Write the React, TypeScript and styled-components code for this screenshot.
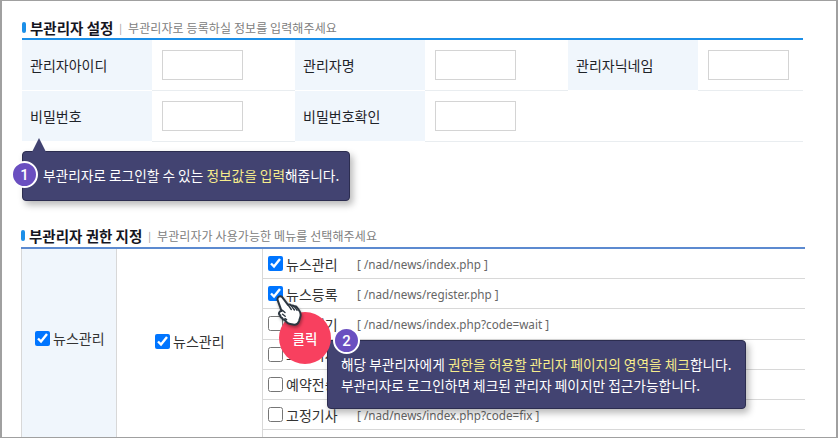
import React from 'react'
import styled, { createGlobalStyle } from 'styled-components'

const GlobalStyle = createGlobalStyle`
    html, body {
        margin: 0;
        padding: 0;
        background: #fff;
    }
    body {
        font-family: "Noto Sans CJK KR", "Noto Sans", sans-serif;
        overflow: hidden;
    }
`

const menuRows = [
    { name: '뉴스관리', path: '[ /nad/news/index.php ]', checked: true },
    { name: '뉴스등록', path: '[ /nad/news/register.php ]', checked: true },
    { name: '뉴스대기', path: '[ /nad/news/index.php?code=wait ]', checked: false },
    { name: '보류기사', path: '[ /nad/news/index.php?code=hold ]', checked: false },
    { name: '예약전송', path: '[ /nad/news/index.php?code=res ]', checked: false },
    { name: '고정기사', path: '[ /nad/news/index.php?code=fix ]', checked: false },
    { name: '', path: '', checked: false },
]

const HandCursor = () => (
    <HandSvg width="26" height="32" viewBox="0 0 26 32">
        <path
            d="M2 2.500C3 .8 5 .8 6.200 2.200L12 9.800c1.300-.4 2.500-.1 3.300.8 1.100-.4 2.200-.1 3 .8 1-.2 1.900.1 2.600 1l2.300 3.100c1.400 2 1.800 4.300 1.100 6.500l-1.200 3.800c-.9 2.600-3.400 4.200-6 3.800l-2.900-.5c-1.400-.2-2.700-.9-3.600-2l-2-2.300c-1.200.1-2.200-.7-2.400-1.900-1.200-.2-2-1.300-1.900-2.500-1.100-.6-1.500-1.900-1-3 .4-.9 1.300-1.400 2.300-1.300L1.900 5.800C1.300 4.700 1.400 3.500 2 2.500z"
            fill="#fff"
            stroke="#2c3640"
            strokeWidth="2"
            strokeLinejoin="round"
        />
        <path d="M12.200 10.200l3.100 4.300M15.400 10.800l3 4.200M18.500 11.600l2.600 3.700M6.400 15.200l2.600 2.400M6.600 19.300l2.600 2M9 23.600l1.600 1.100" fill="none" stroke="#2c3640" strokeWidth="1.400" strokeLinecap="round" />
    </HandSvg>
)

const App: React.FC = () => {
    return (
        <Frame>
            <GlobalStyle />
            <SectionTitle>
                <TitleMark />
                <TitleText>부관리자 설정</TitleText>
                <TitleDivider>|</TitleDivider>
                <TitleHint>부관리자로 등록하실 정보를 입력해주세요</TitleHint>
            </SectionTitle>
            <FormGrid>
                <FormLabel>관리자아이디</FormLabel>
                <FormCell><TextBox /></FormCell>
                <FormLabel>관리자명</FormLabel>
                <FormCell><TextBox /></FormCell>
                <FormLabel>관리자닉네임</FormLabel>
                <FormCell><TextBox /></FormCell>
                <FormLabel>비밀번호</FormLabel>
                <FormCell><TextBox /></FormCell>
                <FormLabel>비밀번호확인</FormLabel>
                <FormCell><TextBox /></FormCell>
                <BlankCell />
                <CalloutOne>
                    <Badge>1</Badge>
                    부관리자로 로그인할 수 있는 <Mark>정보값을 입력</Mark>해줍니다.
                </CalloutOne>
            </FormGrid>

            <SectionTitleLower>
                <TitleMark />
                <TitleText>부관리자 권한 지정</TitleText>
                <TitleDivider>|</TitleDivider>
                <TitleHint>부관리자가 사용가능한 메뉴를 선택해주세요</TitleHint>
            </SectionTitleLower>
            <MenuTable>
                <GroupCell>
                    <CheckLabel>
                        <CheckBox type="checkbox" defaultChecked />
                        뉴스관리
                    </CheckLabel>
                </GroupCell>
                <SubGroupCell>
                    <CheckLabel>
                        <CheckBox type="checkbox" defaultChecked />
                        뉴스관리
                    </CheckLabel>
                </SubGroupCell>
                <MenuList>
                    {menuRows.map((row, i) => (
                        <MenuRow key={i}>
                            {row.name && (
                                <>
                                    <RowName>
                                        <CheckBox type="checkbox" defaultChecked={row.checked} />
                                        {row.name}
                                    </RowName>
                                    <RowPath>{row.path}</RowPath>
                                </>
                            )}
                        </MenuRow>
                    ))}
                </MenuList>
                <HandCursor />
                <ClickDot>클릭</ClickDot>
                <CalloutTwo>
                    <Badge>2</Badge>
                    <CalloutLine>해당 부관리자에게 <Mark>권한을 허용할 관리자 페이지의 영역을 체크</Mark>합니다.</CalloutLine>
                    <CalloutLine>부관리자로 로그인하면 체크된 관리자 페이지만 접근가능합니다.</CalloutLine>
                </CalloutTwo>
            </MenuTable>
        </Frame>
    )
}

const Frame = styled.div`
    box-sizing: border-box;
    width: 838px;
    height: 438px;
    padding: 16px 33px 0 20px;
    border: 1px solid #a0a0a0;
    border-width: 1px 2px 1px 2px;
    overflow: hidden;
    position: relative;
    background: #fff;
`

const SectionTitle = styled.div`
    display: flex;
    align-items: center;
    height: 20px;
    color: #111;
`

const SectionTitleLower = styled(SectionTitle)`
    margin-top: 83px;
    margin-left: -1px;
`

const TitleMark = styled.span`
    width: 4px;
    height: 11px;
    margin-right: 4px;
    border-radius: 2px;
    background: #1c8fe8;
`

const TitleText = styled.strong`
    font-size: 14.500px;
    font-weight: 700;
    color: #15151f;
`

const TitleDivider = styled.span`
    margin: 0 6px;
    font-size: 10px;
    color: #999;
`

const TitleHint = styled.span`
    font-size: 12px;
    letter-spacing: 0.1px;
    color: #808080;
`

const FormGrid = styled.div`
    position: relative;
    display: grid;
    width: 781px;
    grid-template-columns: 130px 143px 130px 143px 130px 105px;
    grid-auto-rows: 51px;
    margin-top: 1px;
    border-top: 2px solid #1c8fe8;
`

const FormLabel = styled.div`
    display: flex;
    align-items: center;
    padding-left: 8px;
    background: #f0f6fc;
    border-bottom: 1px solid #fff;
    font-size: 14px;
    color: #1f2329;
`

const FormCell = styled.div`
    display: flex;
    align-items: center;
    padding: 0 0 1px 10px;
    border-bottom: 1px solid #e9edf0;
`

const BlankCell = styled.div`
    grid-column: span 2;
    border-bottom: 1px solid #e9edf0;
`

const TextBox = styled.input`
    box-sizing: border-box;
    width: 81px;
    height: 30px;
    border: 1px solid #d4d4d4;
    background: #fff;
    outline: none;
`

const Callout = styled.div`
    position: absolute;
    box-sizing: border-box;
    background: #424371;
    border: 1px solid #2c2d50;
    border-radius: 4px;
    box-shadow: 3px 4px 7px rgba(0, 0, 0, 0.28);
    font-size: 13.700px;
    color: #fff;
`

const CalloutOne = styled(Callout)`
    left: 0;
    top: 111px;
    width: 328px;
    height: 50px;
    padding: 13px 0 0 20px;
    white-space: nowrap;

    &::before {
        content: '';
        position: absolute;
        left: 9px;
        top: -14px;
        border-left: 7px solid transparent;
        border-right: 7px solid transparent;
        border-bottom: 14px solid #424371;
    }
`

const CalloutTwo = styled(Callout)`
    left: 306px;
    top: 91px;
    width: 419px;
    height: 69px;
    padding: 13px 0 0 13px;
`

const CalloutLine = styled.div`
    height: 21px;
    line-height: 21px;
    white-space: nowrap;
`

const Mark = styled.span`
    color: #f6ec8c;
`

const Badge = styled.span`
    position: absolute;
    display: flex;
    align-items: center;
    justify-content: center;
    box-sizing: border-box;
    width: 27px;
    height: 27px;
    left: -12px;
    top: 9px;
    border: 2px solid #fff;
    border-radius: 50%;
    background: #6a4fc0;
    font-family: "Roboto", sans-serif;
    font-size: 15px;
    font-weight: 500;
    color: #fff;

    ${CalloutTwo} & {
        left: 5px;
        top: -14px;
    }
`

const MenuTable = styled.div`
    position: relative;
    display: grid;
    width: 784px;
    margin-top: 2px;
    grid-template-columns: 96px 146px 542px;
    border-top: 2px solid #5c8ad0;
    margin-left: -1px;
`

const GroupCell = styled.div`
    display: flex;
    align-items: flex-start;
    padding: 79px 0 0 13px;
    background: #f0f6fc;
    border-left: 1px solid #d8d8d8;
    border-right: 1px solid #d8d8d8;
`

const SubGroupCell = styled.div`
    display: flex;
    align-items: flex-start;
    padding: 82px 0 0 38px;
    border-right: 1px solid #d8d8d8;
`

const MenuList = styled.div`
    display: flex;
    flex-direction: column;
`

const MenuRow = styled.div`
    flex: none;
    display: flex;
    align-items: center;
    box-sizing: border-box;
    height: 30.200px;
    padding-left: 5px;
    border-bottom: 1px solid #d8d8d8;
`

const CheckLabel = styled.label`
    display: flex;
    align-items: center;
    gap: 3px;
    font-size: 14px;
    color: #333;
`

const CheckBox = styled.input`
    width: 15px;
    height: 15px;
    margin: 0;
    accent-color: #0075ff;
`

const RowName = styled(CheckLabel)`
    width: 89px;
`

const RowPath = styled.span`
    font-family: "Noto Sans", sans-serif;
    font-size: 11.700px;
    color: #666;
`

const HandSvg = styled.svg`
    position: absolute;
    left: 255px;
    top: 46px;
    filter: drop-shadow(1px 2px 1.500px rgba(0, 0, 0, 0.35));
    z-index: 3;
`

const ClickDot = styled.div`
    position: absolute;
    left: 258px;
    top: 63px;
    z-index: 2;
    display: flex;
    align-items: center;
    justify-content: center;
    width: 52px;
    height: 52px;
    border-radius: 50%;
    background: #f8405f;
    font-size: 13.500px;
    font-weight: 500;
    color: #fff;
`

export default App
